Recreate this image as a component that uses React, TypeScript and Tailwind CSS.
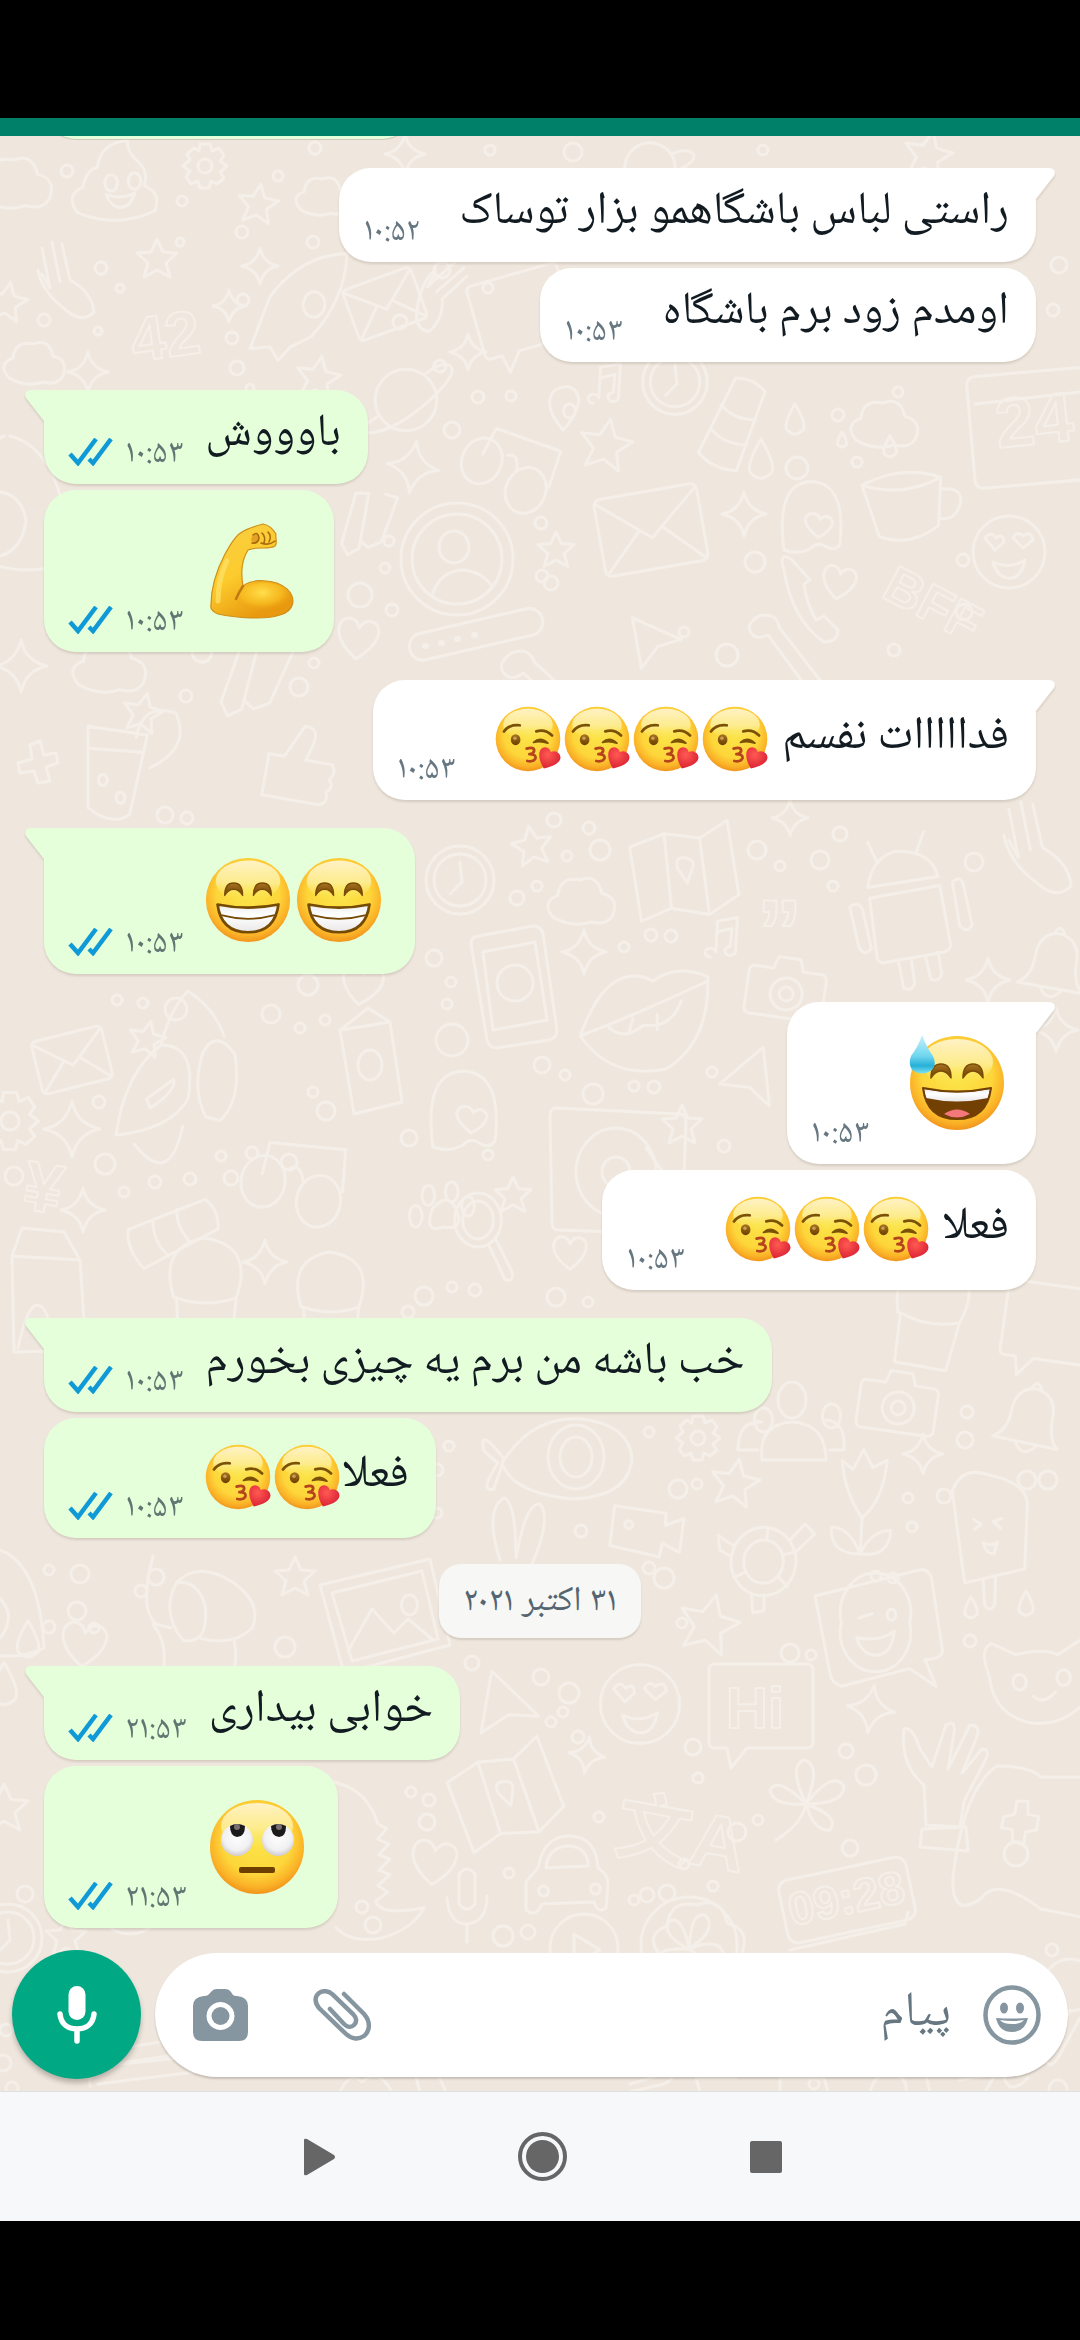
import type { ReactNode } from "react";

/* ---------- Wallpaper ---------- */

type Spot = [x: number, y: number, size: number, turn?: number];

const STAR = "M0 -20 L6 -7 L20 -6 L9 4 L13 18 L0 11 L-13 18 L-9 4 L-20 -6 L-6 -7Z";
const SPARKLE = "M0 -20 Q3 -4 20 0 Q4 3 0 20 Q-3 4 -20 0 Q-4 -3 0 -20Z";
const HEART = "M0 18 C-28 -2 -18 -20 -8 -18 Q-2 -17 0 -10 Q4 -18 11 -17 C22 -14 22 2 0 18Z";
const DROP = "M0 -16 Q12 4 8 10 Q0 18 -8 10 Q-12 4 0 -16Z";
const CLOUD = "M-26 14 Q-38 0 -22 -6 Q-20 -24 -2 -20 Q14 -26 18 -8 Q34 -4 28 12 Q22 22 8 18 Q-8 24 -26 14Z";
const GEAR = "M-5 -22 H5 L7 -15 L14 -18 L19 -11 L15 -5 L22 0 L15 6 L19 12 L12 18 L6 15 L4 22 H-5 L-7 15 L-14 18 L-19 11 L-15 5 L-22 0 L-15 -6 L-18 -12 L-11 -18 L-6 -15Z M7 0 A7 7 0 1 1 -7 0 A7 7 0 1 1 7 0";
const CHECK_PENCIL = "M-22 -28 L-8 -32 L-2 30 L-12 40 L-22 30Z M10 -36 L24 -36 L20 16 L8 26 L-2 22";
const CAMERA = "M-34 -18 H-16 L-12 -30 H10 L14 -18 H32 Q38 -18 38 -12 V24 Q38 30 32 30 H-34 Q-40 30 -40 24 V-12 Q-40 -18 -34 -18Z M16 6 A16 16 0 1 1 -16 6 A16 16 0 1 1 16 6 M7 6 A7 7 0 1 1 -7 6 A7 7 0 1 1 7 6";
const BELL = "M-30 22 Q-18 14 -18 -4 Q-18 -26 0 -28 Q20 -26 20 -4 Q20 14 30 22Z M-8 24 Q0 36 10 24 M-4 -28 Q0 -38 5 -28";
const ENVELOPE = "M-40 -24 Q-40 -30 -34 -30 H34 Q40 -30 40 -24 V24 Q40 30 34 30 H-34 Q-40 30 -40 24Z M-38 -26 L0 6 L38 -26 M-38 28 L-10 0 M38 28 L10 0";
const NOTES = "M-14 18 A6 5 0 1 1 -8 12 L-6 -22 L16 -26 L14 10 A6 5 0 1 1 8 6 L10 -14 L-6 -10";
const CLOCK = "M34 0 A34 34 0 1 1 -34 0 A34 34 0 1 1 34 0 M26 0 A26 26 0 1 1 -26 0 A26 26 0 1 1 26 0 M0 -18 L2 2 L-10 14";
const MAP = "M-46 -24 L-14 -34 L18 -28 L44 -42 L50 26 L22 42 L-12 34 L-40 44Z M-14 -34 L-12 34 M18 -28 L22 42 M6 -10 Q-6 -14 -4 -2 L4 12 L10 -2 Q12 -8 6 -10Z";
const LIPS = "M-58 20 Q-40 -30 -14 -34 Q-2 -36 8 -30 Q30 -46 58 -34 Q60 26 20 50 Q-30 60 -58 20Z M-58 20 Q-6 0 58 -30 M-34 10 Q-20 26 0 10 Q24 14 34 -12 M-10 4 L-14 18 M12 0 L12 14";
const PLAYARROW = "M-24 -28 L30 -4 L4 4 L-14 28Z";
const THUMB = "M-30 30 V-8 H-16 L-2 -38 Q12 -40 8 -22 L4 -8 H28 Q34 -2 28 6 Q34 12 27 18 Q31 26 23 30Z";
const CUP = "M-34 -20 Q0 -34 32 -20 L26 20 Q0 36 -24 24Z M-34 -20 Q0 -6 32 -20 M32 -10 Q50 -10 46 4 Q40 18 28 14";
const PLANET = "M28 0 A28 28 0 1 1 -28 0 A28 28 0 1 1 28 0 M-24 14 Q-48 28 -36 30 Q-10 30 26 -4 Q50 -28 38 -32 Q30 -34 18 -24";
const GHOST = "M-30 40 Q-40 -34 0 -36 Q40 -34 32 34 Q26 42 16 36 Q8 30 0 38 Q-14 46 -30 40Z M8 26 Q-14 8 -2 0 Q8 -2 10 6 Q18 -2 24 8 Q24 18 8 26";
const GLASSES = "M-46 -30 L30 -36 L34 6 M-46 -30 L-48 2 M-24 10 A22 26 0 1 1 -24 9 M34 20 A22 26 0 1 1 34 19 M-22 -8 Q-12 -16 -6 4";
const PHONE = "M-34 -50 L20 -60 Q28 -60 30 -52 L44 44 Q44 52 36 54 L-16 62 Q-24 62 -26 54 L-42 -42 Q-42 -50 -34 -50Z M-30 -34 L22 -44 L34 34 L-20 44Z M20 -4 A18 18 0 1 1 -16 -2 A18 18 0 1 1 20 -4";
const FACE = "M36 0 A36 36 0 1 1 -36 0 A36 36 0 1 1 36 0 M-16 10 Q0 18 16 8 Q12 28 -2 26 Q-12 24 -16 10Z M-14 -2 L-24 -14 Q-18 -22 -13 -14 Q-6 -20 -5 -10Z M14 -4 L4 -14 Q8 -22 14 -16 Q22 -22 24 -12Z";
const PERSON = "M56 0 A56 56 0 1 1 -56 0 A56 56 0 1 1 56 0 M45 0 A45 45 0 1 1 -45 0 A45 45 0 1 1 45 0 M12 -12 A15 16 0 1 1 -18 -12 A15 16 0 1 1 12 -12 M-25 36 Q-16 10 8 11 Q26 14 34 26";
const BUBBLE = "M-52 -44 Q-52 -50 -46 -50 H46 Q52 -50 52 -44 V28 Q52 34 46 34 H-14 L-30 54 L-34 34 H-46 Q-52 34 -52 28Z";
const CAR = "M-42 36 V8 Q-34 -2 -30 -6 Q-24 -40 4 -38 Q28 -36 30 -6 Q40 0 40 10 L38 34 Q30 40 26 28 L-26 30 Q-32 44 -42 36Z M-22 -6 Q-20 -28 2 -28 Q20 -26 20 -8Z M-24 12 A5 5 0 1 1 -25 12 M28 10 A5 5 0 1 1 27 10";
const VIDEO = "M-34 -22 L18 -18 L18 -6 L36 -14 L34 20 L16 12 L14 26 L-36 18Z M-18 -8 A4 4 0 1 1 -19 -8";
const CLOVER = "M0 0 Q-34 2 -36 -14 Q-28 -28 0 0 Q-18 -38 -2 -44 Q16 -40 0 0 Q26 -34 38 -18 Q38 0 0 0 Q34 12 24 26 Q8 28 0 0 Q-4 20 -30 36";
const TURTLE = "M36 4 A36 38 0 1 1 -36 4 A36 38 0 1 1 36 4 M22 4 A22 24 0 1 1 -22 4 A22 24 0 1 1 22 4 M-34 -8 L-54 -18 L-50 -2 L-36 4 M26 -24 L40 -44 L52 -34 L36 -14 M-8 42 L-4 62 L8 58 L6 40 M0 -20 V-34 M20 -6 L34 -12 M18 18 L30 28 M-18 18 L-30 26";
const FISH = "M60 0 Q56 38 0 40 Q-60 34 -70 4 Q-40 -44 10 -40 Q58 -34 60 0Z M32 -2 A28 32 0 1 1 -24 -2 A28 32 0 1 1 32 -2 M20 -2 A16 20 0 1 1 -12 -2 A16 20 0 1 1 20 -2 M-68 0 Q-94 -34 -88 -8 L-74 4 Q-94 34 -78 30Z";
const CAT = "M-46 -4 Q-56 -30 -44 -34 L-22 -24 Q4 -30 16 -24 L38 -38 Q44 -30 40 20 Q20 42 -10 38 Q-42 30 -46 -4Z M-18 -6 A6 7 0 1 1 -19 -6 M22 -10 A6 7 0 1 1 21 -10 M-6 14 Q4 22 14 10";
const PICTURE = "M-66 -30 L44 -56 L64 30 L-42 58Z M-54 -22 L36 -44 L52 24 L-34 46Z M-38 36 L-14 -6 L8 18 L22 4 L46 24 M24 -20 A8 10 0 1 1 23 -20";
const DOG = "M-34 -30 Q-10 -56 30 -30 Q62 -6 50 20 Q30 40 -6 32 M-34 -30 Q-52 4 -26 34 Q2 38 -2 -4 Q-10 -34 -34 -30Z M-60 -60 Q-76 0 -56 16 L-40 20 M-60 16 Q-40 40 -52 80 M30 34 Q36 60 24 80";
const SWIRL = "M-44 34 Q-58 14 -38 6 Q-34 -14 -22 -16 Q-18 -44 12 -46 Q10 -34 22 -24 Q36 -12 30 4 Q50 12 42 32 Q0 52 -44 34Z M-6 -8 A7 9 0 1 1 -7 -8 M20 -10 A7 9 0 1 1 19 -10 M-12 14 Q6 20 20 12 Q14 30 2 28 Q-8 26 -12 14Z";
const STICKER = "M-60 -30 L36 -54 Q44 -54 46 -46 L56 20 Q54 28 40 28 L50 52 L26 36 L-36 52 Q-44 50 -46 42Z M26 -6 A32 36 0 1 1 -36 -6 A32 36 0 1 1 26 -6 M-22 8 Q0 12 12 2 Q10 24 -6 24 Q-18 22 -22 8Z M-20 -10 L-8 -14 M10 -18 A4 5 0 1 1 9 -18";
const POPSICLE = "M-40 -40 Q-34 -66 -6 -60 Q34 -56 36 -34 L40 30 L-18 50 Q-26 20 -40 -40Z M0 46 L4 70 Q10 78 14 68 L12 42 M-16 -14 L-8 -10 L-14 -4 M12 -18 L4 -14 L12 -8 M-4 8 Q4 12 10 6 L8 18 Q0 20 -4 8Z";
const PAD = "M-60 40 Q-50 -40 -20 -60 Q10 -60 20 -50 H70 V80 L20 70 Q-20 40 -34 60 Q-62 80 -60 40Z M-14 -14 L-4 -16 L-2 -28 L8 -28 L8 -16 L18 -14 L16 -2 L6 0 L4 12 L-6 8 L-6 -2 L-16 -4Z";
const HAND = "M-4 50 L-6 10 Q-30 -10 -26 -46 Q-18 -50 -10 -26 L2 -8 L16 -50 Q26 -56 24 -42 L18 -6 L40 -50 Q52 -50 46 -36 L32 -2 L52 -26 Q60 -26 56 -16 L34 26 L30 52Z M-8 54 L36 52 L38 76 L-10 72Z";
const ROCKET = "M-46 50 L-30 -10 Q0 -60 50 -66 Q54 -16 20 30 L-2 44 L-14 60 L-24 46Z M20 -20 A12 14 0 1 1 19 -20";
const MITTEN = "M-26 -34 L-18 6 L-26 -8 M-16 -40 L-8 0 M-6 -38 L2 -2 Q24 10 26 30 Q14 42 -2 28 Q-26 10 -30 -12";
const ANDROID = "M-38 -34 Q-34 -66 -8 -74 Q32 -76 40 -46Z M-28 -62 L-38 -84 M16 -74 L24 -96 M-36 -22 L42 -36 L54 30 Q54 36 46 38 L-22 50 Q-28 48 -28 42Z M-58 -12 Q-50 -20 -44 -10 L-34 34 Q-42 44 -48 32Z M56 -40 Q64 -48 68 -38 L78 8 Q72 18 64 8Z M-4 48 L2 78 Q12 82 14 72 L10 44 M26 42 L32 68 Q42 72 44 62 L40 38";
const LOOKER = "M-30 -64 Q24 -50 30 60 Q-10 80 -60 60 M-60 -8 Q-20 -14 -14 20 Q-18 60 -60 58 M-36 -64 L-64 -50";
const GLASSWARE = "M-30 -38 L24 -30 L8 42 Q-8 54 -30 36Z M-28 -18 L20 -14 M14 -28 Q20 -60 50 -50 Q64 -18 26 0 M-16 6 A4 5 0 1 1 -17 6 M0 22 A4 5 0 1 1 -1 22";
const SODA = "M-34 -70 Q-10 -84 20 -70 L30 70 Q-10 84 -40 68Z M-38 -20 Q-8 -6 24 -20 M-36 24 Q-6 38 28 24";
const DINO = "M-40 -60 Q6 -60 18 -20 L26 -16 L18 -6 L28 -2 L19 8 L29 12 L19 22 L29 26 L18 36 L27 42 L16 50 Q20 64 60 56 Q50 76 20 84 Q-8 88 -20 74";
const GUITAR = "M-60 -52 Q-76 -40 -68 -30 Q-60 -20 -46 -30 L40 52 L56 40 L-34 -42 Q-40 -60 -60 -52Z";
const TURNTABLE = "M-64 -60 L60 -54 Q66 -54 66 -46 L62 60 Q62 66 54 66 L-62 62 Q-68 62 -68 54 L-70 -52 Q-70 -60 -64 -60Z M36 4 A40 44 0 1 1 -44 4 A40 44 0 1 1 36 4 M10 4 A14 15 0 1 1 -18 4 A14 15 0 1 1 10 4 M26 -20 L44 6";
const ORANGE = "M48 0 A48 48 0 1 1 -48 0 A48 48 0 1 1 48 0 M0 4 Q-28 -10 -20 -24 Q-6 -30 0 4 Q2 -34 16 -30 Q30 -16 0 4 Q30 -8 34 8 Q24 22 0 4 Q-28 2 -34 14";
const PLAYCIRCLE = "M34 0 A34 34 0 1 1 -34 0 A34 34 0 1 1 34 0 M-10 -14 L16 2 L-10 16Z";
const MIC = "M-8 -34 Q0 -44 8 -34 L8 -4 Q0 6 -8 -4Z M-20 -10 Q-18 16 0 16 Q20 14 20 -12 M0 16 V34";
const CARTON = "M-36 -34 L-26 -62 L16 -58 L32 -30 L38 60 L-34 62Z M-36 -34 L32 -30 M-30 58 Q-20 10 -8 16 Q2 20 4 60";
const PAWS = "M-4 10 Q14 -12 24 14 Q30 34 8 30 Q-14 38 -4 10Z M-22 6 A7 12 0 1 1 -23 6 M-8 -16 A7 11 0 1 1 -9 -16 M18 -20 A7 11 0 1 1 17 -20 M36 -4 A7 11 0 1 1 35 -4";
const LENS = "M26 0 A26 30 0 1 1 -26 0 A26 30 0 1 1 26 0 M17 0 A17 21 0 1 1 -17 0 A17 21 0 1 1 17 0 M12 28 L30 66 Q40 70 38 58 L20 22";
const MATCHBOX = "M-32 -34 L18 -42 L30 38 L-18 50Z M-32 -34 L-4 -56 L18 -42 M10 0 A12 15 0 1 1 -14 2 A12 15 0 1 1 10 0";
const BEE = "M-60 50 Q-50 -20 -10 -50 Q30 -50 20 10 Q0 44 -60 50Z M-40 60 Q0 110 14 40 M40 30 Q24 0 36 -40 Q50 -70 72 -40 Q80 10 56 34Z M-26 10 L4 -12 Q8 0 -22 20Z M20 -110 Q50 -90 60 -60 M20 -110 Q0 -90 -10 -50";
const PEOPLE = "M-30 40 Q-34 4 0 2 Q34 4 34 40Z M14 -20 A14 18 0 1 1 -14 -20 A14 18 0 1 1 14 -20 M-34 30 H-54 Q-54 0 -30 2 M-28 -12 A9 12 0 1 1 -29 -12 M38 30 H52 Q54 0 32 0 M40 -16 A9 12 0 1 1 39 -16";
const TULIP = "M0 20 Q-20 -10 -22 -44 L-10 -34 L2 -56 L12 -36 L28 -44 Q24 0 0 20Z M0 20 L-2 60 M-2 60 Q-36 60 -34 30 Q-14 30 -2 60 Q30 64 32 34 Q10 34 -2 60";
const MUG = "M-20 44 L20 44 L24 6 Q0 14 -22 6Z M-24 6 Q-36 -34 0 -40 Q38 -34 24 6";

const SHAPES: [string, Spot[]][] = [
  [STAR, [[258, 204, 1, 8], [157, 259, 1], [7, 302, 1, 10], [606, 445, 1.3, 10], [556, 550, 0.9], [143, 713, 1, 12], [532, 846, 1, -10], [147, 1039, 0.9, 12], [682, 1125, 1], [513, 1195, 0.9], [295, 1577, 1], [735, 1483, 1.2, 10], [709, 1624, 1.5, 14], [4, 1808, 1.2], [928, 155, 1.2, 12], [318, 378, 1.1, 10], [66, 1937, 1]]],
  [SPARKLE, [[260, 266, 0.9], [229, 306, 0.8], [468, 352, 0.9], [413, 467, 1.3, 8], [744, 514, 1.1], [21, 666, 1.3], [584, 952, 1.1], [988, 980, 1.1], [72, 1129, 1.4], [83, 1210, 1.1], [265, 1262, 1.1], [923, 1454, 1], [871, 1709, 1.2, 8], [587, 1755, 0.9, 8], [405, 154, 1], [790, 818, 0.9], [1056, 1030, 1.1], [88, 372, 1]]],
  [HEART, [[839, 583, 0.9, 10], [358, 639, 1.1, 6], [434, 1863, 1.2, 6], [570, 1253, 0.9], [84, 1645, 1.2, 6], [362, 985, 1.1, 10]]],
  [DROP, [[795, 420, 1], [761, 460, 1.3], [842, 440, 0.5], [890, 447, 0.7], [971, 1608, 0.7], [1026, 1604, 0.8], [4, 1685, 1.4], [28, 1640, 1.2]]],
  [CLOUD, [[16, 184, 1.2], [324, 197, 0.9], [885, 425, 1.1], [582, 902, 1.1], [35, 364, 1], [110, 668, 1.2], [700, 1935, 1.5]]],
  [GEAR, [[205, 166, 1], [10, 1121, 1.3], [698, 1438, 1]]],
  [CHECK_PENCIL, [[368, 523, 0.9, 16], [255, 679, 1.1, 20]]],
  [CAMERA, [[787, 988, 1, 8], [899, 1402, 1, 8]]],
  [BELL, [[1054, 964, 1.1, 10], [1030, 1419, 1.1, 12]]],
  [ENVELOPE, [[72, 1060, 0.9, -14], [651, 530, 1.3, -10], [385, 304, 0.9, -20]]],
  [NOTES, [[606, 387, 0.9], [723, 941, 0.9]]],
  [CLOCK, [[675, 382, 0.95], [460, 880, 1], [130, 1900, 1], [8, 1938, 1]]],
  [MAP, [[682, 870, 1.1, -4], [503, 1794, 1.1, -16]]],
  [LIPS, [[644, 1014, 1.1]]],
  [PLAYARROW, [[654, 643, 0.9], [751, 1082, 1, 60], [506, 1709, 1.1, 20]]],
  [THUMB, [[300, 768, 1.1, 10]]],
  [CUP, [[905, 505, 1.2, -6]]],
  [PLANET, [[406, 400, 1.1], [650, 168, 0.9, 20]]],
  [GHOST, [[811, 514, 0.9], [463, 1107, 1]]],
  [GLASSES, [[523, 470, 0.9, 24], [310, 1180, 1, 10]]],
  [PHONE, [[513, 986, 1]]],
  [FACE, [[1009, 552, 1], [640, 1704, 1.1]]],
  [PERSON, [[457, 559, 1]]],
  [BUBBLE, [[761, 1714, 1], [523, 318, 0.9, -16], [1050, 1330, 0.9, 8]]],
  [CAR, [[568, 1874, 1]]],
  [VIDEO, [[647, 1530, 1, 4]]],
  [CLOVER, [[806, 1804, 1]]],
  [TURTLE, [[764, 1558, 0.9, 8]]],
  [FISH, [[572, 1459, 1]]],
  [CAT, [[1040, 1681, 1.1]]],
  [PICTURE, [[386, 1615, 1]]],
  [DOG, [[207, 1610, 0.9]]],
  [SWIRL, [[117, 182, 0.9]]],
  [STICKER, [[881, 1629, 1.1]]],
  [POPSICLE, [[988, 1535, 1, 6]]],
  [PAD, [[1019, 1832, 1.1]]],
  [HAND, [[930, 1775, 1]]],
  [ROCKET, [[296, 308, 0.9, 6]]],
  [MITTEN, [[68, 282, 1], [440, 298, 0.9, 60], [1040, 850, 1.2]]],
  [ANDROID, [[902, 918, 0.9]]],
  [LOOKER, [[40, 500, 1], [20, 1600, 0.8]]],
  [GLASSWARE, [[121, 768, 1.1]]],
  [SODA, [[737, 425, 0.6, 24], [175, 1235, 0.6, 66]]],
  [DINO, [[358, 1846, 1.1]]],
  [GUITAR, [[565, 700, 0.9], [800, 665, 0.8, 10]]],
  [TURNTABLE, [[620, 1168, 1]]],
  [ORANGE, [[689, 1945, 1]]],
  [PLAYCIRCLE, [[584, 1948, 1]]],
  [MIC, [[467, 1908, 1]]],
  [CARTON, [[48, 1290, 1]]],
  [PAWS, [[436, 1200, 0.9]]],
  [LENS, [[478, 1220, 0.9]]],
  [MATCHBOX, [[372, 1064, 1]]],
  [BEE, [[170, 1090, 0.9]]],
  [PEOPLE, [[792, 1420, 1]]],
  [TULIP, [[862, 1500, 0.9]]],
  [MUG, [[330, 1300, 1.2], [205, 1290, 1.3], [930, 1310, 1.3, 10]]],
];

const DOTS: [number, number, number][] = [
  [67, 171, 6], [315, 148, 6], [278, 176, 5], [242, 232, 6], [182, 201, 5], [180, 242, 4], [313, 242, 6], [490, 150, 5], [573, 152, 9], [574, 190, 6],
  [763, 150, 5], [101, 268, 6], [120, 288, 4], [243, 300, 6], [44, 320, 6], [98, 331, 4], [232, 338, 6], [442, 270, 8], [488, 288, 5], [400, 322, 7],
  [237, 368, 7], [250, 388, 4], [440, 366, 6], [478, 397, 6], [511, 396, 5], [452, 430, 8], [898, 392, 5], [838, 415, 6], [797, 468, 11], [857, 462, 5],
  [389, 541, 5], [541, 523, 6], [385, 568, 5], [542, 576, 6], [551, 583, 7], [755, 562, 10], [963, 560, 6], [964, 612, 8], [360, 595, 12], [392, 610, 6],
  [727, 655, 11], [684, 632, 5], [894, 650, 6], [202, 652, 10], [299, 687, 9], [314, 663, 5], [186, 696, 6], [1059, 265, 8], [1053, 310, 6], [740, 700, 9],
  [165, 815, 8], [187, 818, 6], [554, 820, 7], [589, 828, 6], [600, 850, 10], [757, 850, 9], [780, 866, 5], [840, 834, 7], [820, 860, 9], [974, 862, 9], [833, 886, 5],
  [567, 856, 5], [537, 886, 5], [517, 898, 7], [434, 958, 8], [624, 947, 5], [651, 935, 6], [671, 936, 6], [308, 985, 10], [271, 1014, 9], [176, 1009, 11], [143, 1003, 5], [117, 1000, 5],
  [451, 982, 5], [447, 1004, 5], [452, 1040, 16], [542, 1065, 8], [565, 1075, 5], [593, 1094, 10], [712, 1072, 5], [634, 1086, 5], [654, 1087, 6], [325, 1020, 5], [300, 1028, 5],
  [99, 1102, 6], [326, 1111, 9], [313, 1092, 5], [409, 1138, 8], [289, 1162, 8], [105, 1164, 10], [155, 1182, 6], [190, 1179, 6], [231, 1178, 7], [124, 1192, 5], [14, 1176, 9],
  [221, 1156, 5], [252, 1153, 6], [488, 1155, 5], [724, 1146, 6], [452, 1287, 5], [475, 1290, 6], [424, 1296, 9], [556, 1297, 9], [588, 1302, 5], [408, 1312, 6],
  [449, 1446, 5], [437, 1470, 6], [437, 1513, 5], [581, 1531, 6], [649, 1432, 5], [678, 1489, 9], [697, 1484, 5], [664, 1578, 10], [649, 1568, 6], [682, 1623, 5], [908, 1498, 5], [912, 1527, 5], [944, 1496, 7],
  [1027, 1480, 9], [1048, 1480, 9], [965, 1440, 8], [967, 1412, 6], [876, 1576, 5], [893, 1578, 5], [49, 1570, 5], [80, 1574, 9], [77, 1611, 9], [94, 1628, 5], [49, 1627, 6], [156, 1577, 8], [141, 1591, 6],
  [285, 1647, 10], [472, 1663, 7], [541, 1677, 8], [569, 1693, 10], [551, 1722, 5], [563, 1712, 5], [578, 1737, 6], [693, 1747, 8], [790, 1653, 9], [811, 1655, 5], [970, 1641, 6],
  [411, 1792, 5], [429, 1800, 6], [427, 1822, 8], [509, 1873, 5], [599, 1817, 5], [698, 1778, 5], [737, 1832, 9], [758, 1820, 5], [846, 1751, 7], [866, 1775, 10], [850, 1848, 8],
  [634, 1900, 5], [647, 1895, 7], [667, 1893, 8], [713, 1886, 5], [684, 1864, 5], [503, 1936, 10], [528, 1932, 7], [362, 1907, 6], [373, 1925, 8], [25, 1894, 8], [1016, 1854, 12],
  [773, 2010, 8], [1052, 1950, 6], [6, 2030, 6], [12, 2088, 6], [814, 2084, 5], [3, 2063, 8], [1058, 2089, 9], [1070, 1985, 26],
];

const WORDS: [string, number, number, number, number][] = [
  ["42", 134, 362, 62, -8],
  ["24", 998, 448, 70, -6],
  ["BFF", 880, 596, 52, 28],
  ["Hi", 726, 1728, 58, 0],
  ["文A", 612, 1850, 76, 10],
  ["09:28", 792, 1926, 46, -12],
  ["„", 757, 912, 90, 0],
  ["¥", 20, 1208, 70, 10],
];

function Wallpaper() {
  return (
    <svg
      aria-hidden="true"
      className="pointer-events-none absolute inset-0 h-full w-full"
      viewBox="0 136 1080 1957"
      preserveAspectRatio="xMidYMin slice"
      fill="none"
      stroke="#f5efe9"
      strokeWidth="3"
      strokeLinejoin="round"
      strokeLinecap="round"
    >
      {SHAPES.map(([d, spots]) =>
        spots.map(([x, y, s, r = 0]) => (
          <path key={`${x}-${y}`} d={d} vectorEffect="non-scaling-stroke" transform={`translate(${x} ${y}) rotate(${r}) scale(${s})`} />
        )),
      )}
      {DOTS.map(([x, y, r]) => (
        <circle key={`${x}-${y}`} cx={x} cy={y} r={r} />
      ))}
      {WORDS.map(([word, x, y, size, r]) => (
        <text key={word} transform={`translate(${x} ${y}) rotate(${r})`} fontSize={size} strokeWidth="2" fontWeight="bold" fontFamily='"Liberation Sans", "Noto Sans CJK SC", sans-serif'>
          {word}
        </text>
      ))}
      <rect x="970" y="372" width="130" height="112" rx="8" transform="rotate(-5 1030 420)" />
      <path d="M975 404 L1080 392" />
      <rect x="408" y="621" width="136" height="27" rx="13" transform="rotate(-13 475 634)" />
      <path d="M425 646 h1 M441 643 h1 M457 639 h1 M474 635 h1" strokeWidth="6" />
      <rect x="782" y="1868" width="130" height="64" rx="10" transform="rotate(-12 847 1900)" />
      <path d="M790 1950 L905 1924 L908 1912" />
      <path d="M563 430 q-22 -26 -8 -40 q20 -10 24 10 q-2 16 -16 30z M570 404 a6 7 0 1 1 -1 0" />
      <path d="M30 745 l10 -4 l4 14 l12 -2 l2 10 l-12 4 l4 14 l-12 2 l-4 -12 l-14 2 l-2 -10 l14 -4z" />
      <path d="M792 560 q-14 -10 -8 10 q8 50 40 72 q14 0 14 -12 l-14 -14 l-8 4 q-10 -18 -12 -36 l6 -4z" />
      <path d="M90 2086 q-2 -16 10 -20 l100 -10 q12 10 -6 16 l-96 12 M100 2066 l110 -16 M110 2050 l100 -16" />
      <path d="M340 2092 q10 -22 22 -10 q16 -16 30 10 M420 2092 l-6 -22 h22 l10 22 M630 2084 l40 -12 q6 6 -6 12 l-34 8 M700 2092 l-4 -14 h40 M780 2092 v-14 h44 l4 14 M870 2092 q6 -22 24 -18 q14 4 12 18 M930 2092 l-4 -16 M960 2080 l36 -6 l-10 16 M1004 2078 q6 18 24 0" />
      <path d="M500 1560 q-16 -50 4 -62 q12 4 12 60 q10 -56 24 -54 q12 14 -8 60" />
      <path d="M760 1985 l40 -6 M1070 2010 l-24 50 q4 10 12 -2 l22 -40" />
    </svg>
  );
}

/* ---------- Emoji ---------- */

function EmojiDefs() {
  return (
    <svg aria-hidden="true" className="absolute h-0 w-0">
      <defs>
        <radialGradient id="skin" cx="0.5" cy="0.42" r="0.6">
          <stop offset="0" stopColor="#fbe54a" />
          <stop offset="0.62" stopColor="#fdd63a" />
          <stop offset="0.84" stopColor="#fbb227" />
          <stop offset="1" stopColor="#ee8d1b" />
        </radialGradient>
        <linearGradient id="gloss" x1="0" y1="0" x2="0" y2="1">
          <stop offset="0" stopColor="#fff2c6" />
          <stop offset="0.55" stopColor="#fdf0a0" stopOpacity="0.8" />
          <stop offset="1" stopColor="#fbe54a" stopOpacity="0" />
        </linearGradient>
        <linearGradient id="brown" x1="0" y1="0" x2="0" y2="1">
          <stop offset="0" stopColor="#a87420" />
          <stop offset="1" stopColor="#6b3f00" />
        </linearGradient>
        <linearGradient id="teeth" x1="0" y1="0" x2="0" y2="1">
          <stop offset="0" stopColor="#ececec" />
          <stop offset="0.4" stopColor="#ffffff" />
          <stop offset="1" stopColor="#e9e6e6" />
        </linearGradient>
        <radialGradient id="heart" cx="0.4" cy="0.35" r="0.7">
          <stop offset="0" stopColor="#ff5a52" />
          <stop offset="1" stopColor="#d91f33" />
        </radialGradient>
        <linearGradient id="sweat" x1="0" y1="0" x2="0" y2="1">
          <stop offset="0" stopColor="#c9f1fb" />
          <stop offset="0.55" stopColor="#6fd6ee" />
          <stop offset="0.8" stopColor="#25b0d8" />
          <stop offset="1" stopColor="#7fe3f2" />
        </linearGradient>
        <radialGradient id="eyeball" cx="0.5" cy="0.4" r="0.6">
          <stop offset="0" stopColor="#ffffff" />
          <stop offset="0.7" stopColor="#f1f0f2" />
          <stop offset="1" stopColor="#cfcbd0" />
        </radialGradient>
        <linearGradient id="arm" x1="0" y1="0" x2="0.5" y2="1">
          <stop offset="0" stopColor="#f8cf45" />
          <stop offset="0.55" stopColor="#fccb2d" />
          <stop offset="1" stopColor="#e8990f" />
        </linearGradient>
        <radialGradient id="biceps" cx="0.45" cy="0.3" r="0.6">
          <stop offset="0" stopColor="#ffe04d" />
          <stop offset="0.6" stopColor="#fabf22" stopOpacity="0.7" />
          <stop offset="1" stopColor="#e8990f" stopOpacity="0" />
        </radialGradient>
      </defs>
    </svg>
  );
}

function Face({ children }: { children: ReactNode }) {
  return (
    <>
      <circle cx="48" cy="48" r="47" fill="url(#skin)" />
      <ellipse cx="48" cy="27" rx="36" ry="23" fill="url(#gloss)" />
      {children}
    </>
  );
}

function Kiss() {
  return (
    <svg role="img" aria-label="😘" viewBox="0 0 96 96" className="mt-[26px] mb-[28px] size-[66px] shrink-0">
      <Face>
        <path d="M13 37 Q21 26 36 28" fill="none" stroke="#7a5106" strokeWidth="4" strokeLinecap="round" />
        <path d="M60 37 Q73 33 83 43" fill="none" stroke="#7a5106" strokeWidth="4" strokeLinecap="round" />
        <ellipse cx="30" cy="49" rx="7" ry="8" fill="url(#brown)" />
        <circle cx="29" cy="47" r="2.5" fill="#c9a05a" />
        <path d="M56 53 Q66 44 77 54 Q66 50 56 53Z" fill="#7a5106" stroke="#7a5106" strokeWidth="2.5" strokeLinejoin="round" />
        <path d="M46 62 Q57 59 57 65 Q56 70 50 70 Q60 70 59 76 Q56 82 47 80" fill="none" stroke="#b5441c" strokeWidth="4" strokeLinecap="round" strokeLinejoin="round" />
        <path d="M71 91 C60 73 64 60 73 60 Q80 61 81 67 Q88 64 93 69 C101 80 86 88 71 91Z" fill="url(#heart)" />
      </Face>
    </svg>
  );
}

function SmilingEyes() {
  return (
    <>
      <path d="M22 43 Q22 29 32 29 Q42 29 42 43 Q38 36 32 36 Q26 36 22 43Z" fill="url(#brown)" stroke="#7a4c06" strokeWidth="1.5" strokeLinejoin="round" />
      <path d="M54 43 Q54 29 64 29 Q74 29 74 43 Q70 36 64 36 Q58 36 54 43Z" fill="url(#brown)" stroke="#7a4c06" strokeWidth="1.5" strokeLinejoin="round" />
    </>
  );
}

function Beaming() {
  return (
    <svg role="img" aria-label="😁" viewBox="0 0 96 96" className="mt-[29px] mb-[31px] size-[86px] shrink-0">
      <Face>
        <SmilingEyes />
        <path d="M14 53 Q48 60 82 53 Q78 84 48 84 Q18 84 14 53Z" fill="url(#teeth)" stroke="#754a03" strokeWidth="3" strokeLinejoin="round" />
        <path d="M18 65 Q48 73 78 65" fill="none" stroke="#754a03" strokeWidth="2" />
      </Face>
    </svg>
  );
}

function Sweating() {
  return (
    <svg role="img" aria-label="😅" viewBox="0 0 96 96" className="my-[33px] size-24 shrink-0">
      <Face>
        <SmilingEyes />
        <path d="M14 53 Q48 60 82 53 Q78 84 48 84 Q18 84 14 53Z" fill="#734003" />
        <path d="M15 54 Q48 61 81 54 L79 63 Q48 70 17 63Z" fill="url(#teeth)" />
        <path d="M35 79 Q48 70 61 79 Q48 86 35 79Z" fill="#f4777c" />
        <path d="M14 53 Q48 60 82 53 Q78 84 48 84 Q18 84 14 53Z" fill="none" stroke="#734003" strokeWidth="2" strokeLinejoin="round" />
        <path d="M13 0 Q18 13 24 21 Q28 30 23 35 Q13 42 3 35 Q-1 29 2 21 Q9 12 13 0Z" fill="url(#sweat)" />
      </Face>
    </svg>
  );
}

function RollingEyes() {
  return (
    <svg role="img" aria-label="🙄" viewBox="0 0 96 96" className="my-[33px] size-24 shrink-0">
      <Face>
        <circle cx="28" cy="41" r="16" fill="url(#eyeball)" />
        <circle cx="69" cy="41" r="16" fill="url(#eyeball)" />
        <path d="M21 27 Q28 23 36 27 Q36 38 28 38 Q21 37 21 27Z" fill="#1d1a1c" />
        <path d="M62 27 Q69 23 77 27 Q77 38 70 38 Q62 37 62 27Z" fill="#1d1a1c" />
        <circle cx="28" cy="28" r="3" fill="#77706e" />
        <circle cx="70" cy="28" r="3" fill="#77706e" />
        <rect x="30" y="68" width="36" height="6" rx="2" fill="#6d3f02" />
      </Face>
    </svg>
  );
}

function Biceps() {
  return (
    <svg role="img" aria-label="💪" viewBox="0 0 96 96" className="my-[33px] size-24 shrink-0">
      <path
        d="M34 11 C40 6 50 3 58 1 C64 2 68 6 71 11 C70 15 73 20 70 23 C65 27 52 23 43 27 C36 38 36 52 38 63 C46 56 70 55 82 66 C92 76 89 88 75 92 C62 97 30 95 13 91 C8 89 5 86 6 82 C6 68 9 52 20 31 C25 22 29 15 34 11Z"
        fill="url(#arm)"
        stroke="#d08f1a"
        strokeWidth="1.2"
      />
      <ellipse cx="60" cy="76" rx="28" ry="16" fill="url(#biceps)" />
      <path d="M22 38 Q13 56 13 78" fill="none" stroke="#ffe269" strokeWidth="5" strokeLinecap="round" opacity="0.7" />
      <path d="M38 63 Q34 69 31 76" fill="none" stroke="#c07a10" strokeWidth="2.5" strokeLinecap="round" />
      <path d="M48 12 Q52 10 54 14 L52 19 Q47 21 46 16Z" fill="#e3a227" />
      <path d="M48 12 Q53 8 54 15 Q53 21 47 20 M57 10 Q61 14 59 20 M63 9 Q67 13 64 19 M56 20 Q64 23 70 18" fill="none" stroke="#a8690c" strokeWidth="1.6" strokeLinecap="round" />
    </svg>
  );
}

/* ---------- Chat ---------- */

function ReadMark() {
  return (
    <svg role="img" aria-label="خوانده شد" viewBox="0 0 45 28" className="mr-3 mb-2 h-7 w-[45px] shrink-0" fill="none" stroke="#0f9ad7" strokeWidth="4.5">
      <path d="M2 16 L10 25 L28 1" />
      <path d="M21 21 L25 25 L43 1" />
    </svg>
  );
}

function Bubble({ sent, first, time, children }: { sent?: boolean; first?: boolean; time: string; children: ReactNode }) {
  return (
    <li
      className={`relative flex items-end rounded-[32px] pr-[27px] pl-6 drop-shadow-[0_2px_1px_rgba(80,60,40,0.16)] ${
        sent ? "self-start bg-[#e5ffdb]" : "self-end bg-white"
      } ${first ? (sent ? "rounded-tl-none" : "rounded-tr-none") : ""} ${first ? "mt-7" : "mt-1.5"}`}
    >
      {first && (
        <svg
          aria-hidden="true"
          viewBox="0 0 20 31"
          className={`absolute top-0 h-[31px] w-5 ${sent ? "-left-[19px] text-[#e5ffdb]" : "-right-[19px] -scale-x-100 text-white"}`}
        >
          <path d="M20 0 H6 Q-2 1 1 8 L19 31 H20Z" fill="currentColor" />
        </svg>
      )}
      <div className={`flex items-end pb-2.5 ${sent ? "mr-[22px]" : "mr-10"}`}>
        {sent && <ReadMark />}
        <time className={`text-[33px] leading-10 ${sent ? "text-[#5f7772]" : "text-[#667781]"}`}>{time}</time>
      </div>
      <div dir="rtl" className="flex items-center text-[46px] leading-[66px] whitespace-nowrap text-[#111b21]">
        {children}
      </div>
    </li>
  );
}

function Line({ children }: { children: ReactNode }) {
  return <p className="pt-2.5 pb-[18px]">{children}</p>;
}

export default function App() {
  return (
    <div className="flex min-h-screen flex-col bg-black pt-[118px] font-['Noto_Naskh_Arabic_UI','Noto_Naskh_Arabic','Noto_Sans',sans-serif]">
      <EmojiDefs />
      <header className="h-[18px] bg-[#008069]" />
      <main className="relative flex flex-col bg-[#efe7de]">
        <Wallpaper />
        <div className="relative flex flex-col">
          <div className="flex h-1 items-end overflow-hidden pb-px pl-11">
            <div className="h-16 w-[370px] shrink-0 rounded-b-[32px] bg-[#e5ffdb] shadow-[0_1px_1px_rgba(80,60,40,0.2)]" />
          </div>
          <ol className="flex flex-col px-11">
            <Bubble first time="۱۰:۵۲">
              <Line>راستی لباس باشگاهمو بزار توساک</Line>
            </Bubble>
            <Bubble time="۱۰:۵۳">
              <Line>اومدم زود برم باشگاه</Line>
            </Bubble>
            <Bubble sent first time="۱۰:۵۳">
              <Line>باوووش</Line>
            </Bubble>
            <Bubble sent time="۱۰:۵۳">
              <div className="flex pr-1.5">
                <Biceps />
              </div>
            </Bubble>
            <Bubble first time="۱۰:۵۳">
              <p className="pb-2 pl-3.5">فدااااات نفسم</p>
              <div className="flex gap-[3px]">
                <Kiss />
                <Kiss />
                <Kiss />
                <Kiss />
              </div>
            </Bubble>
            <Bubble sent first time="۱۰:۵۳">
              <div className="flex gap-[5px] pr-1.5">
                <Beaming />
                <Beaming />
              </div>
            </Bubble>
            <Bubble first time="۱۰:۵۳">
              <div className="flex pr-1">
                <Sweating />
              </div>
            </Bubble>
            <Bubble time="۱۰:۵۳">
              <p className="pb-2 pl-3.5">فعلا</p>
              <div className="flex gap-[3px]">
                <Kiss />
                <Kiss />
                <Kiss />
              </div>
            </Bubble>
            <Bubble sent first time="۱۰:۵۳">
              <Line>خب باشه من برم یه چیزی بخورم</Line>
            </Bubble>
            <Bubble sent time="۱۰:۵۳">
              <p className="pb-2 pl-0.5">فعلا</p>
              <div className="flex gap-[3px]">
                <Kiss />
                <Kiss />
              </div>
            </Bubble>
            <li
              dir="rtl"
              className="mt-[26px] self-center rounded-[22px] bg-[#f7f8f6] px-6 pt-3.5 pb-3 text-[35px] leading-[48px] text-[#54656f] shadow-[0_2px_2px_rgba(80,60,40,0.16)]"
            >
              ۳۱ اکتبر ۲۰۲۱
            </li>
            <Bubble sent first time="۲۱:۵۳">
              <Line>خوابی بیداری</Line>
            </Bubble>
            <Bubble sent time="۲۱:۵۳">
              <div className="flex pr-1.5">
                <RollingEyes />
              </div>
            </Bubble>
          </ol>

          <form className="mt-[22px] mb-3 flex items-center gap-3.5 px-3" onSubmit={(e) => e.preventDefault()}>
            <button type="button" aria-label="پیام صوتی" className="flex size-[129px] shrink-0 items-center justify-center rounded-full bg-[#00a884] shadow-[0_4px_5px_rgba(60,50,40,0.3)]">
              <svg viewBox="0 0 40 58" className="h-[58px] w-10" fill="none" stroke="white" strokeWidth="5.5" strokeLinecap="round">
                <rect x="11.5" y="0" width="17" height="34" rx="8.5" fill="white" stroke="none" />
                <path d="M3 28 C4 38 11 43 20 43 C29 43 36 38 37 28 M20 43 V55" />
              </svg>
            </button>
            <div className="flex h-[124px] min-w-0 flex-1 items-center rounded-full bg-white pr-[27px] pl-[38px] shadow-[0_2px_2px_rgba(60,50,40,0.22)]">
              <button type="button" aria-label="دوربین" className="shrink-0">
                <svg viewBox="0 0 55 52" className="h-[52px] w-[55px]" fill="#8696a0">
                  <path fillRule="evenodd" d="M18 3 Q20 0 24 0 H32 Q36 0 38 3 L40 6 Q41 7 44 7 Q55 8 55 17 V43 Q55 52 46 52 H9 Q0 52 0 43 V17 Q0 8 11 7 Q14 7 15 6Z M27.500 13 A14 14 0 1 0 27.510 13Z" />
                  <circle cx="27.500" cy="27" r="9" />
                </svg>
              </button>
              <button type="button" aria-label="پیوست" className="ml-[65px] shrink-0">
                <svg viewBox="0 0 59 52" className="h-[52px] w-[59px]" fill="none" stroke="#8696a0" strokeWidth="4.500" strokeLinecap="round">
                  <path d="M31 5 L51 25 C58 33 57 42 51 47 C45 51 38 50 32 44 L6 19 C1 13 2 7 6 4 C10 1 16 2 19 5 L40 25 C44 29 44 33 41 36 C38 39 34 38 31 35 L17 20" />
                </svg>
              </button>
              <input
                type="text"
                dir="rtl"
                aria-label="پیام"
                placeholder="پیام"
                className="h-full min-w-0 flex-1 bg-transparent pr-8 pb-1 text-[49px] outline-none placeholder:text-[#667781]"
              />
              <button type="button" aria-label="شکلک" className="shrink-0">
                <svg viewBox="0 0 58 60" className="h-[60px] w-[58px]" fill="#8696a0">
                  <ellipse cx="29" cy="30" rx="26.500" ry="27.500" fill="none" stroke="#8696a0" strokeWidth="4.500" />
                  <ellipse cx="21" cy="23" rx="4" ry="5.500" />
                  <ellipse cx="37" cy="23" rx="4" ry="5.500" />
                  <path fillRule="evenodd" d="M13 33 Q29 34 45 33 Q42 47 29 47 Q16 47 13 33Z M17 35 Q20 39 29 39 Q38 39 41 35 Q29 37 17 35Z" />
                </svg>
              </button>
            </div>
          </form>
        </div>
      </main>

      <nav className="flex h-[130px] items-center justify-center gap-[183px] border-t border-[#dedfe0] bg-[#f7f8fa] pl-1.5">
        <button type="button" aria-label="بازگشت">
          <svg viewBox="0 0 31 38" className="h-[38px] w-[31px]" fill="#666">
            <path d="M0 2 Q0 0 3 1 L30 17 Q32 19 30 21 L3 37 Q0 38 0 36Z" />
          </svg>
        </button>
        <button type="button" aria-label="خانه">
          <svg viewBox="0 0 49 49" className="size-[49px]">
            <circle cx="24.500" cy="24.500" r="22.500" fill="none" stroke="#666" strokeWidth="4" />
            <circle cx="24.500" cy="24.500" r="16.500" fill="#666" />
          </svg>
        </button>
        <button type="button" aria-label="برنامه‌های اخیر" className="size-8 rounded-xs bg-[#666]" />
      </nav>
    </div>
  );
}
